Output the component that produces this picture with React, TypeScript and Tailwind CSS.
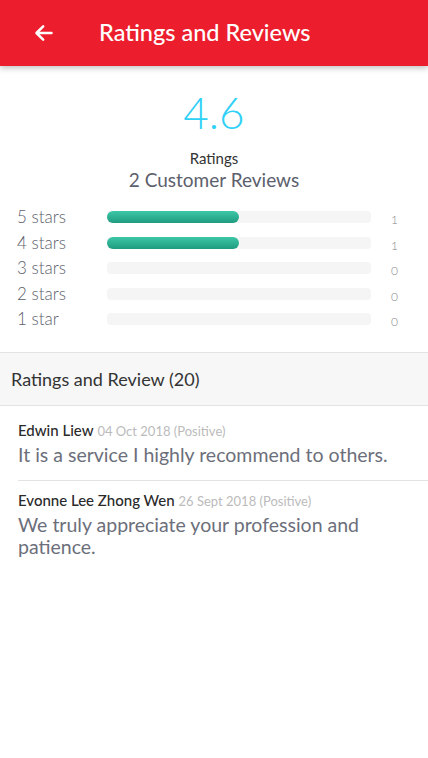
import React from 'react';

const rows = [
  { label: '5 stars', count: 1 },
  { label: '4 stars', count: 1 },
  { label: '3 stars', count: 0 },
  { label: '2 stars', count: 0 },
  { label: '1 star', count: 0 },
];

const reviews = [
  {
    name: 'Edwin Liew',
    meta: '04 Oct 2018 (Positive)',
    text: 'It is a service I highly recommend to others.',
  },
  {
    name: 'Evonne Lee Zhong Wen',
    meta: '26 Sept 2018 (Positive)',
    text: 'We truly appreciate your profession and patience.',
  },
];

const App = () => {
  const total = 2;
  return (
    <div className="min-h-[758px] bg-white font-['Lato','Noto_Sans',sans-serif]">
      <header className="relative z-10 flex h-[66px] items-center bg-[#ec1e2d] shadow-[0_2px_6px_rgba(0,0,0,0.25)]">
        <svg className="ml-[34px] h-5 w-5" viewBox="0 0 24 24" fill="none" stroke="white" strokeWidth="3" strokeLinecap="round" strokeLinejoin="round">
          <path d="M21 12H4" />
          <path d="M11 4l-8 8 8 8" />
        </svg>
        <h1 className="ml-[45px] text-[23.5px] font-medium text-white">Ratings and Reviews</h1>
      </header>

      <section className="flex flex-col items-center pt-[20px]">
        <div className="text-[44px] font-light leading-[52px] text-[#30d0f7]">4.6</div>
        <div className="mt-[10px] text-[15px] leading-[20px] text-[#333]">Ratings</div>
        <div className="text-[19px] leading-[24px] text-[#5c606c]">2 Customer Reviews</div>
      </section>

      <section className="mt-[15px] flex flex-col gap-[5.5px] pb-[23px] pl-[17px] pr-[20px]">
        {rows.map((r) => (
          <div key={r.label} className="flex h-[20px] items-center">
            <span className="w-[90px] text-[17px] font-light text-[#5c606c]">{r.label}</span>
            <div className="h-[12px] w-[264px] rounded-sm bg-[#f5f5f5]">
              <div
                className="h-full rounded-full bg-gradient-to-b from-[#3cc7a7] to-[#1f9c80]"
                style={{ width: `${(r.count / total) * 100}%` }}
              />
            </div>
            <span className="ml-[20px] mt-[6px] text-[12px] font-light text-[#888]">{r.count}</span>
          </div>
        ))}
      </section>

      <div className="flex h-[54px] items-center border-y border-[#e3e3e3] bg-[#f7f7f7] pl-[11px]">
        <span className="text-[18px] text-[#333]">Ratings and Review (20)</span>
      </div>

      <div className="pl-[18px]">
        {reviews.map((rv, i) => (
          <div
            key={rv.name}
            className={`pr-[20px] ${i === 0 ? 'border-b border-[#e3e3e3] pt-[14px] pb-[14px]' : 'pt-[9px] pb-[12px]'}`}
          >
            <div className="text-[15px] leading-[20px]">
              <span className="font-medium text-[#2a2a2a]">{rv.name}</span>{' '}
              <span className="text-[13px] text-[#bbb]">{rv.meta}</span>
            </div>
            <p className="mt-[3px] text-[19.5px] leading-[22px] text-[#6c6f7b]">{rv.text}</p>
          </div>
        ))}
      </div>
    </div>
  );
};

export default App;
